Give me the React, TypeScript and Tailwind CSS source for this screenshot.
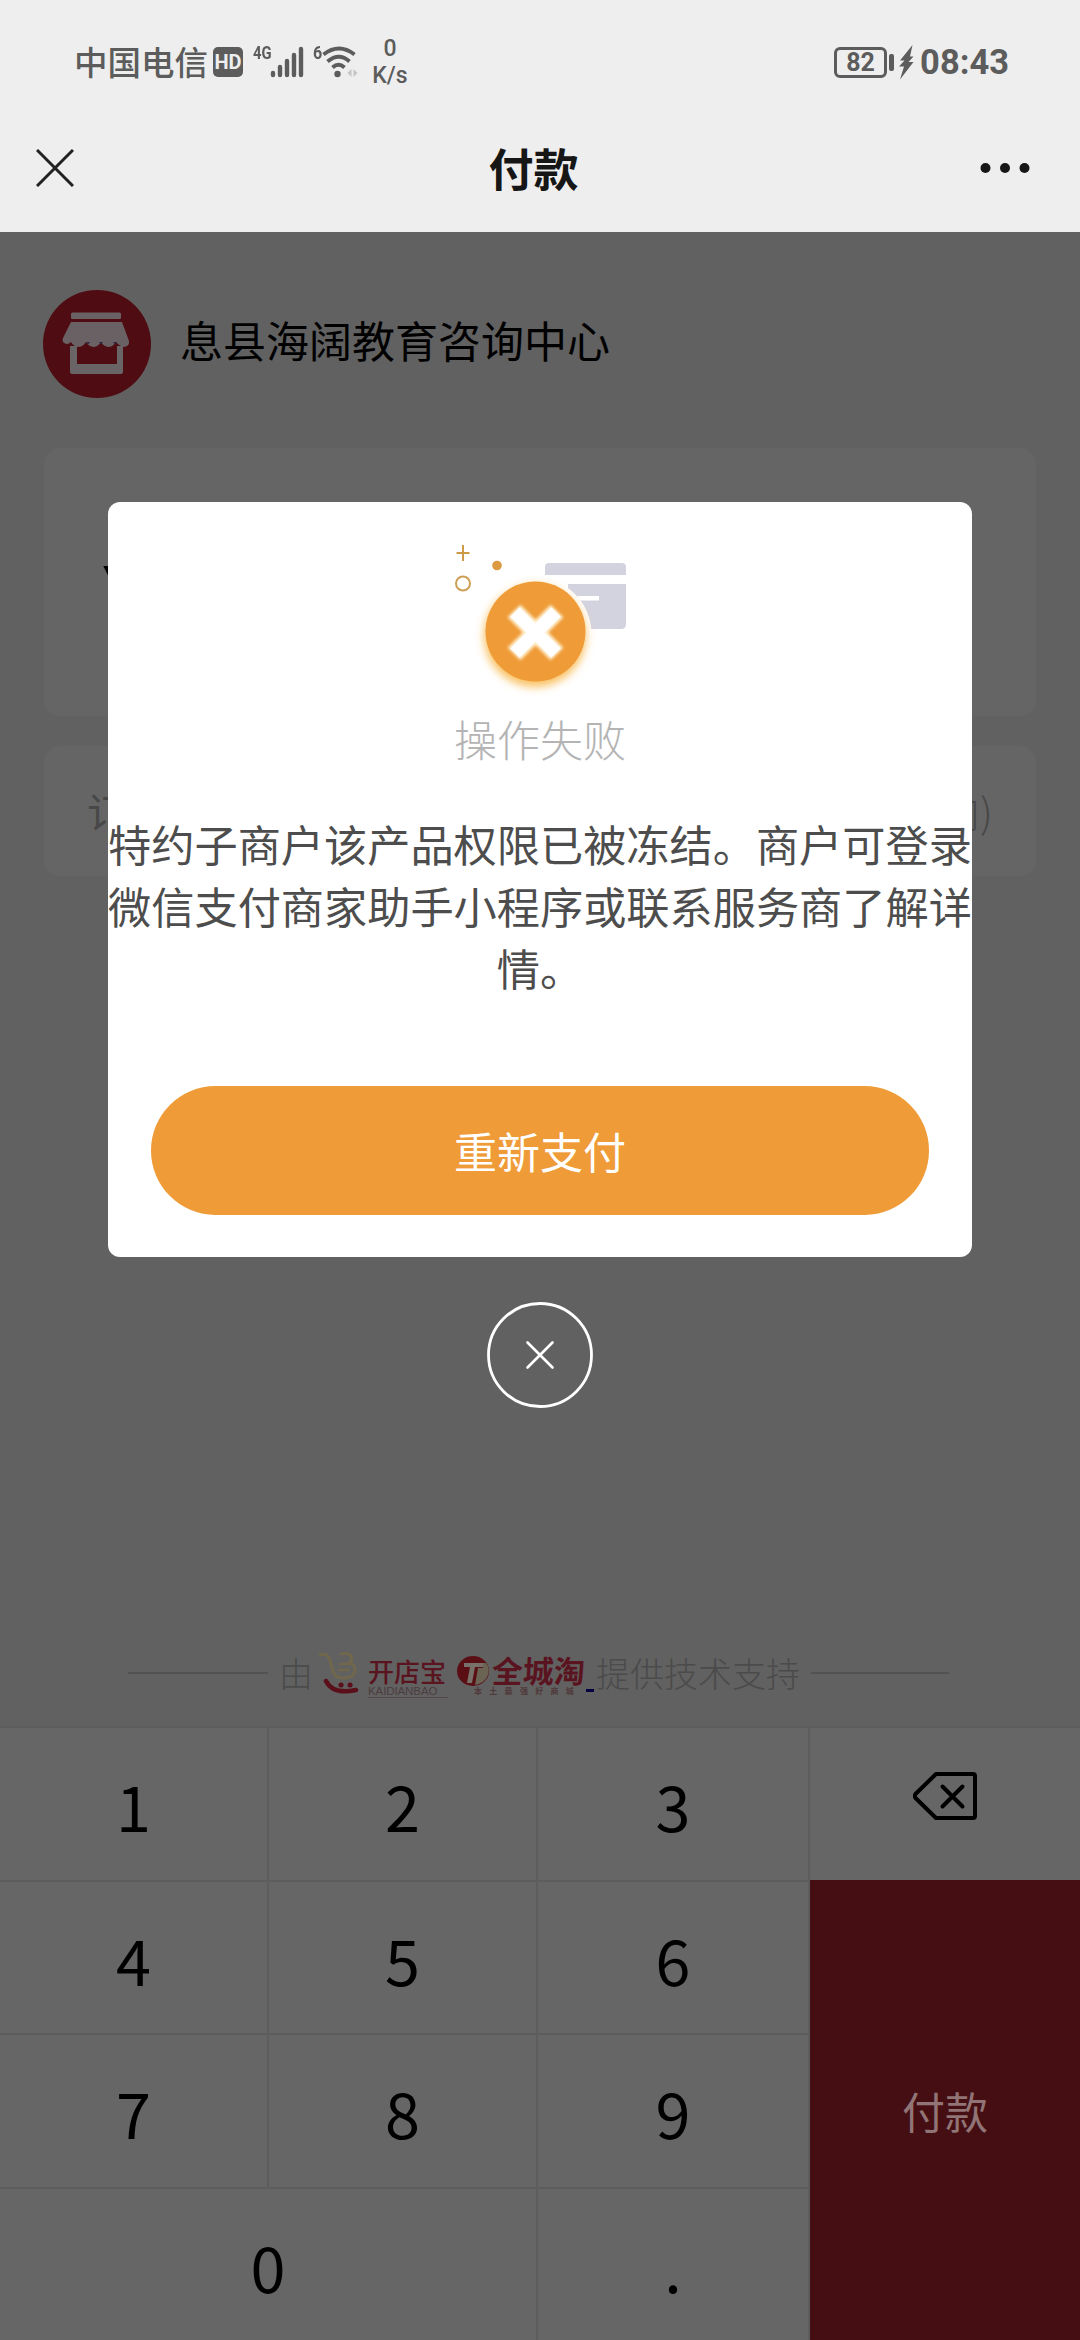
import React from "react";

function StatusBar() {
  return (
    <div className="flex h-[124px] items-center justify-between pr-[71px] pl-[74px] text-[#5c5c5c]">
      <div className="flex items-center">
        <span className="w-[139px] pb-[2px] text-[33.5px] leading-[40px] font-medium">中国电信</span>
        <span className="flex h-[30px] w-[30px] items-center justify-center rounded-[5px] bg-[#5c5c5c] font-['Roboto'] text-[20px] font-bold text-[#eeeeee]">
          HD
        </span>
        <span className="ml-[10px] h-[38px] w-[18px] origin-left scale-x-[0.78] font-['Roboto'] text-[19px] leading-[20px] font-bold">
          4G
        </span>
        <svg className="-ml-[1px] h-[32px] w-[36px]" viewBox="270 45 36 32" stroke="#5c5c5c" strokeWidth="4.400" strokeLinecap="round">
          <path d="M273 72v2M280 66v8M287 60v14M294 54v20M301 48v26" />
        </svg>
        <span className="ml-[7px] h-[38px] w-[9px] origin-left scale-x-[0.85] font-['Roboto'] text-[19px] leading-[20px] font-bold">
          6
        </span>
        <svg className="h-[34px] w-[36px]" viewBox="320 44 36 34" fill="none" stroke="#5c5c5c" strokeWidth="3.8">
          <path d="M321.500 53.500Q337 41.500 352.500 53.500M325.500 60.500Q337 51 347.500 60.500M330.500 66.500Q336.500 61 342.500 66.500" />
          <circle cx="335.500" cy="73" r="3.200" fill="#5c5c5c" stroke="none" />
          <path d="M345.500 72l4-4v8zM355.500 72l-4-4v8z" fill="#c4c4c4" stroke="none" />
        </svg>
        <span className="ml-[12px] flex w-[40px] flex-col items-center font-['Roboto'] text-[23px] leading-[27px] font-medium">
          <span>0</span>
          <span>K/s</span>
        </span>
      </div>
      <div className="flex items-center font-['Roboto']">
        <span className="flex h-[31px] w-[53px] items-center justify-center rounded-[6px] border-[3px] border-[#5c5c5c] text-[25px] font-bold leading-none">
          82
        </span>
        <span className="ml-[2px] h-[17px] w-[5px] rounded-[2px] bg-[#5c5c5c]" />
        <svg className="ml-[5px] h-[36px] w-[15px]" viewBox="0 0 15 36" fill="#5c5c5c">
          <path d="M13.500 1L1 16.500h4.500L0 22.500h5L1 35.500 14.500 18H9.500l5-5.500H11z" />
        </svg>
        <span className="ml-[6px] text-[34.500px] leading-[40px] font-bold">08:43</span>
      </div>
    </div>
  );
}

function NavBar() {
  return (
    <div className="flex h-[108px] items-center justify-between px-[36px] pb-[21px] text-[#161616]">
      <svg className="h-[38px] w-[38px]" viewBox="0 0 38 38" stroke="#222" strokeWidth="3">
        <path d="M1 1l36 36M37 1L1 37" />
      </svg>
      <h1 className="pl-[13px] text-[45px] leading-[60px] font-bold">付款</h1>
      <svg className="mr-[14px] h-[12px] w-[50px]" viewBox="0 0 50 12" fill="#161616">
        <circle cx="5.500" cy="6" r="5" />
        <circle cx="25" cy="6" r="5" />
        <circle cx="44.500" cy="6" r="5" />
      </svg>
    </div>
  );
}

function ShopIcon() {
  return (
    <svg className="h-[108px] w-[108px]" viewBox="43 290 108 108">
      <circle cx="97" cy="344" r="54" fill="#4f0c12" />
      <rect x="71" y="312.500" width="50" height="6.500" rx="1.500" fill="#696163" />
      <path d="M70 346h53v26q0 2-2 2H72q-2 0-2-2z" fill="#696466" />
      <path d="M77 344h40v20H77z" fill="#4f0c12" />
      <path d="M71 322h51l7 19q1 5-5 6-5-1-8-5-3 5-8 5-5-1-7-5-3 5-8 5-5-1-7-5-3 5-8 5-5-1-7-5-4 4-8 0-1-2 0-4z" fill="#696163" />
      <path d="M86 342l2 2.500 2-2.500zM99 342l2 2.500 2-2.500zM113 342l2 2.500 2-2.500z" fill="#2d2440" />
    </svg>
  );
}

function Support() {
  return (
    <div className="flex h-[60px] items-center pl-[128px] text-[34px] text-[#4b4b4b]">
      <span className="h-[2px] w-[140px] bg-[#525252]" />
      <span className="ml-[11px] w-[40px] pb-[2px] font-light">由</span>
      <svg className="h-[46px] w-[40px]" viewBox="320 1653 40 46" fill="none" strokeLinecap="round">
        <path d="M321 1658q7-3 10 5l3 11q2 7 10 7 11 0 12-8 0-6-6-7 4-3 2-7-3-4-10-2" stroke="#70674d" strokeWidth="3" />
        <path d="M341 1667h9M340 1673h10" stroke="#70674d" strokeWidth="2.400" />
        <path d="M327 1684q7 14 30 9" stroke="#5a0f1a" strokeWidth="4.500" />
        <path d="M342 1688h.1M351 1688h.1" stroke="#5a0f1a" strokeWidth="5" />
      </svg>
      <span className="ml-[9px] flex w-[84px] flex-col pt-[8px] text-[#5a1420]">
        <span className="text-[26px] leading-[28px] font-medium">开店宝</span>
        <span className="w-[80px] border-b border-[#554448] font-['Liberation_Sans'] text-[11.500px] leading-[12px] tracking-[-0.100px] text-[#4c3c40]">
          KAIDIANBAO
        </span>
      </span>
      <svg className="ml-[5px] h-[32px] w-[33px] -translate-y-[2px]" viewBox="458 1655 33 32">
        <ellipse cx="474" cy="1671" rx="16" ry="15" fill="#5a0f14" />
        <path d="M484 1663h3q4 5 2 12-3 8-13 10l3-17h5z" fill="#6b6455" />
        <path d="M465 1663h19v4h-8l-3 16h-5l3-16h-6z" fill="#77716a" />
      </svg>
      <span className="ml-[2px] flex w-[94px] flex-col pt-[5px] text-[#5a1420]">
        <span className="text-[31px] leading-[31px] font-bold -skew-x-3">全城淘</span>
        <span className="-ml-[18px] w-[110px] text-[8px] leading-[12px] font-bold tracking-[7.300px] whitespace-nowrap text-[#50383a]">
          本土最强好商城
        </span>
      </span>
      <span className="mt-[35px] h-[3px] w-[8px] bg-[#050042]" />
      <span className="ml-[2px] pb-[2px] font-light">提供技术支持</span>
      <span className="ml-[11px] h-[2px] w-[138px] bg-[#525252]" />
    </div>
  );
}

function Key({ label, className = "" }: { label: string; className?: string }) {
  return (
    <div className={`flex items-center justify-center border-t-2 border-r-2 border-[#5d5d5d] pt-[2px] text-[63px] leading-none text-black ${className}`}>
      {label}
    </div>
  );
}

function Keypad() {
  return (
    <div className="grid h-[614px] grid-cols-[269px_269px_272px_270px] grid-rows-4 bg-[#666666]">
      <Key label="1" />
      <Key label="2" />
      <Key label="3" />
      <div className="flex items-center justify-center border-t-2 border-[#5d5d5d] pb-[15px]">
        <svg className="h-[48px] w-[64px]" viewBox="0 0 64 48" fill="none" stroke="#000" strokeWidth="4" strokeLinecap="round" strokeLinejoin="round">
          <path d="M23 2h37q2 0 2 2v40q0 2-2 2H23L2.500 26q-1.500-2 0-4z" />
          <path d="M29.500 14.500l20 20M49.500 14.500l-20 20" />
        </svg>
      </div>
      <Key label="4" />
      <Key label="5" />
      <Key label="6" />
      <button className="row-span-3 bg-[#450e12] text-[43px] text-[#917476]">付款</button>
      <Key label="7" />
      <Key label="8" />
      <Key label="9" />
      <Key label="0" className="col-span-2" />
      <Key label="." />
    </div>
  );
}

function FailIcon() {
  return (
    <svg className="h-[180px] w-[190px]" viewBox="445 530 190 180">
      <defs>
        <filter id="glow" x="-30%" y="-30%" width="160%" height="160%">
          <feGaussianBlur stdDeviation="4" />
        </filter>
        <filter id="soft" x="-30%" y="-30%" width="160%" height="160%">
          <feGaussianBlur stdDeviation="1.800" />
        </filter>
      </defs>
      <path d="M463 545v16M456.500 553h13" stroke="#cf9a48" strokeWidth="2" />
      <circle cx="463" cy="583.500" r="7" fill="none" stroke="#cf9f55" strokeWidth="2" />
      <circle cx="497" cy="565.500" r="4.800" fill="#dc9a42" />
      <path d="M545 575v-8q0-4 4-4h73q4 0 4 4v8z" fill="#d3d3e0" />
      <path d="M568 584h58v40q0 5-5 5h-53z" fill="#d3d3e0" />
      <path d="M578 596h21v4.500h-21z" fill="#fff" />
      <circle cx="535" cy="634" r="56.500" fill="#fff" />
      <circle cx="535" cy="636" r="51" fill="#f9c163" filter="url(#glow)" />
      <circle cx="535.500" cy="631.500" r="50" fill="#ef9b37" />
      <path d="M514 611l43 43M557 611l-43 43" stroke="#fff3d6" strokeWidth="18" filter="url(#soft)" />
      <path d="M515 612l41 41M556 612l-41 41" stroke="#fff" strokeWidth="13" />
    </svg>
  );
}

function FailDialog() {
  return (
    <div className="absolute inset-x-0 top-[502px] flex flex-col items-center">
      <section className="flex h-[755px] w-[864px] flex-col items-center overflow-hidden rounded-[12px] bg-white pt-[28px]">
        <FailIcon />
        <h2 className="-mt-[3px] text-[43px] leading-[62px] font-light text-[#b4b4b4]">操作失败</h2>
        <p className="mt-[43px] w-[864px] text-center text-[43.200px] leading-[62px] text-[#4d4d4d]">
          特约子商户该产品权限已被冻结。商户可登录
          <br />
          微信支付商家助手小程序或联系服务商了解详
          <br />
          情。
        </p>
        <button className="mt-[88px] h-[129px] w-[778px] rounded-full bg-[#ef9b37] pb-[1px] text-[43px] text-white">
          重新支付
        </button>
      </section>
      <svg className="mt-[44px] h-[108px] w-[108px]" viewBox="0 0 108 108" fill="none" stroke="#fff" strokeLinecap="round">
        <circle cx="54" cy="54" r="51.500" strokeWidth="2.800" />
        <path d="M41.500 41.500l25 25M66.500 41.500l-25 25" strokeWidth="2.600" />
      </svg>
    </div>
  );
}

export default function App() {
  return (
    <div className="relative flex h-[2340px] w-[1080px] flex-col overflow-hidden bg-[#616161] font-['Noto_Sans_CJK_SC',sans-serif]">
      <header className="h-[232px] shrink-0 bg-[#eeeeee]">
        <StatusBar />
        <NavBar />
      </header>
      <main className="flex flex-1 flex-col">
        <div className="flex items-center gap-[29px] pt-[58px] pl-[43px]">
          <ShopIcon />
          <span className="pb-[11px] text-[43px] leading-[60px] text-black">息县海阔教育咨询中心</span>
        </div>
        <div className="mx-[44px] mt-[50px] h-[268px] rounded-[16px] bg-[#656565] pt-[104px] pl-[59px]">
          <span className="block h-[24px] overflow-hidden font-['Liberation_Sans'] text-[60px] leading-[70px] font-bold text-black">
            ¥
          </span>
        </div>
        <div className="mx-[44px] mt-[30px] flex h-[130px] items-center justify-between rounded-[16px] bg-[#656565] px-[43px] text-[41px] text-[#484848]">
          <span>订单备注</span>
          <span className="font-light">(50字内)</span>
        </div>
        <div className="mt-auto">
          <div className="pb-[23px]">
            <Support />
          </div>
          <Keypad />
        </div>
      </main>
      <FailDialog />
    </div>
  );
}
